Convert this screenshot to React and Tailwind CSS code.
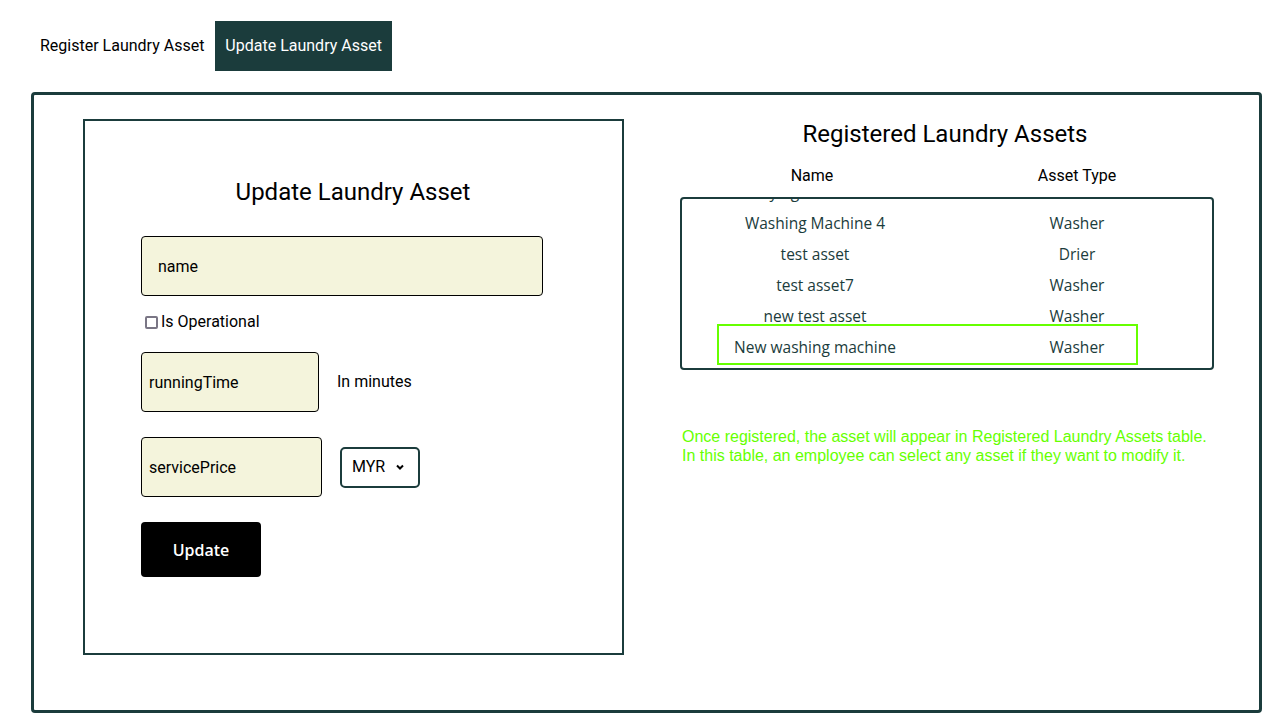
import React, { useState } from 'react';

const assets = [
    { name: 'Drying machine 2', type: 'Drier' },
    { name: 'Washing Machine 4', type: 'Washer' },
    { name: 'test asset', type: 'Drier' },
    { name: 'test asset7', type: 'Washer' },
    { name: 'new test asset', type: 'Washer' },
    { name: 'New washing machine', type: 'Washer' },
];

const App = () => {
    const [operational, setOperational] = useState(false);

    return (
        <div className="min-h-screen bg-white text-black font-['Roboto',sans-serif]">
            {/* Tabs */}
            <div className="flex items-stretch gap-px pl-[30px] pt-[21px] h-[71px]">
                <button className="px-[10px] text-[16px] text-black">Register Laundry Asset</button>
                <button className="px-[10px] text-[16px] text-white bg-[#1b3c3c]">Update Laundry Asset</button>
            </div>

            {/* Main panel */}
            <div className="ml-[31px] mr-[4px] mt-[21px] h-[621px] border-[3px] border-[#1b3c3c] rounded-[4px] flex pl-[49px] pt-[24px]">
                {/* Form */}
                <div className="w-[541px] h-[536px] border-2 border-[#1b3c3c] pt-[57px] pl-[56px]">
                    <h2 className="text-[24px] leading-[28px] text-center w-[424px]">Update Laundry Asset</h2>
                    <input
                        placeholder="name"
                        className="mt-[30px] w-[402px] h-[60px] bg-[#f4f4dc] border border-black rounded-[4px] px-[16px] text-[16px] placeholder-black outline-none"
                    />
                    <label className="flex items-center mt-[16px] ml-[4px] text-[16px] leading-[20px]">
                        <input
                            type="checkbox"
                            checked={operational}
                            onChange={e => setOperational(e.target.checked)}
                            className="appearance-none w-[13px] h-[13px] border-2 border-[#7a7685] rounded-[2px] mr-[3px]"
                        />
                        Is Operational
                    </label>
                    <div className="flex items-center mt-[20px]">
                        <input
                            placeholder="runningTime"
                            className="w-[178px] h-[60px] bg-[#f4f4dc] border border-black rounded-[4px] px-[7px] text-[16px] placeholder-black outline-none"
                        />
                        <span className="ml-[18px] text-[16px]">In minutes</span>
                    </div>
                    <div className="flex items-center mt-[25px]">
                        <input
                            placeholder="servicePrice"
                            className="w-[181px] h-[60px] bg-[#f4f4dc] border border-black rounded-[4px] px-[7px] text-[16px] placeholder-black outline-none"
                        />
                        <div className="ml-[18px] w-[80px] h-[41px] border-2 border-[#1b3c3c] rounded-[5px] flex items-center pl-[10px] text-[16px]">
                            MYR
                            <svg viewBox="0 0 10 10" className="w-[10px] h-[10px] ml-[10px]">
                                <path d="M2 3.5 L5 6.5 L8 3.5" fill="none" stroke="black" strokeWidth="2" />
                            </svg>
                        </div>
                    </div>
                    <button className="mt-[25px] w-[120px] h-[55px] bg-black text-white rounded-[4px] text-[16px] font-semibold font-['Open_Sans',sans-serif]">
                        Update
                    </button>
                </div>

                {/* Table */}
                <div className="ml-[56px] w-[534px] pt-px">
                    <h2 className="text-[24px] leading-[28px] text-center pr-[4px]">Registered Laundry Assets</h2>
                    <div className="flex mt-[18px] text-[16px] leading-[20px]">
                        <div className="w-[264px] text-center">Name</div>
                        <div className="w-[266px] text-center">Asset Type</div>
                    </div>
                    <div className="relative mt-[11px] h-[173px] border-2 border-[#1b3c3c] rounded-[4px] overflow-hidden">
                        <div className="-mt-[22px] font-['Open_Sans',sans-serif] text-[15.5px] text-[#1b3c3c]">
                            {assets.map(a => (
                                <div key={a.name} className="flex h-[31px] items-center">
                                    <div className="w-[266px] text-center">{a.name}</div>
                                    <div className="w-[258px] text-center">{a.type}</div>
                                </div>
                            ))}
                        </div>
                        <div className="absolute left-[35px] top-[125px] w-[421px] h-[41px] border-2 border-[#66ff00]" />
                    </div>
                    <p className="mt-[57px] pl-[2px] text-[16px] leading-[19px] text-[#66ff00] font-['Liberation_Sans',sans-serif]">
                        Once registered, the asset will appear in Registered Laundry Assets table.
                        <br />
                        In this table, an employee can select any asset if they want to modify it.
                    </p>
                </div>
            </div>
        </div>
    );
};

export default App;
